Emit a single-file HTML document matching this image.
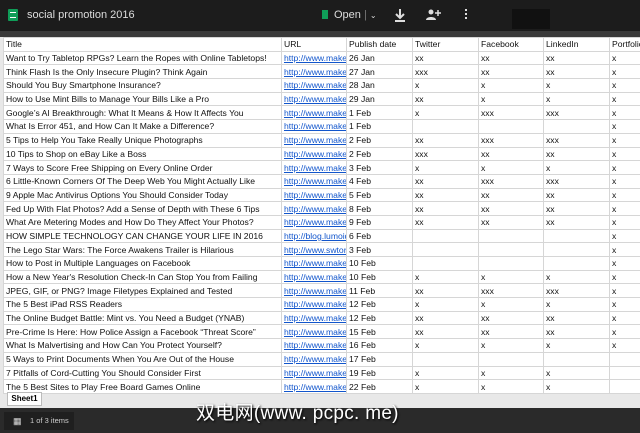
<!DOCTYPE html>
<html><head><meta charset="utf-8"><style>
*{margin:0;padding:0;box-sizing:border-box}
body{width:640px;height:433px;overflow:hidden;background:#2b2b2b;font-family:"Liberation Sans",Arial,sans-serif;position:relative}
.top{position:absolute;left:0;top:0;width:640px;height:31px;background:#1c1c1c;color:#ddd;font-size:11px}
.strip{position:absolute;left:0;top:31px;width:640px;height:6px;background:#3a3a3a}
.sheet{position:absolute;left:0;top:37px;width:640px;height:371px;background:#e8e8e8;overflow:hidden}
table{position:absolute;left:3px;top:0;width:646px;border-collapse:collapse;table-layout:fixed;background:#fff}
td{height:13.7px;border:1px solid #d6d6d6;font-size:8.6px;color:#111;padding:0 2px;white-space:nowrap;overflow:hidden;line-height:12px}
td.u{color:#1155cc;text-decoration:underline}
.tab{position:absolute;left:7px;top:392px;width:35px;height:14px;background:#fff;border:1px solid #bbb;font-size:8px;font-weight:bold;text-align:center;line-height:12px}
.bot{position:absolute;left:0;top:408px;width:640px;height:25px;background:#2a2a2a}
.items{position:absolute;left:4px;top:412px;width:70px;height:18px;background:#1f1f1f;color:#ccc;font-size:7.5px;line-height:18px;padding-left:26px}
.wm{position:absolute;left:196px;top:398px;color:#fff;font-size:19px;letter-spacing:0.3px;font-family:"Liberation Sans","Noto Sans CJK SC",sans-serif;text-shadow:1px 1px 2px #000}
</style></head><body>
<div class="top">
 <div style="position:absolute;left:8px;top:9px;width:10px;height:12px;background:#0f9d58;border-radius:1px"></div>
 <div style="position:absolute;left:10px;top:12px;width:6px;height:6px;border:1px solid #fff;border-width:1px 0"></div>
 <div style="position:absolute;left:27px;top:9px">social promotion 2016</div>
 <div style="position:absolute;left:322px;top:10px;width:6px;height:9px;background:#0f9d58"></div>
 <div style="position:absolute;left:334px;top:9px">Open <span style="color:#777">|</span> <span style="font-size:8px">&#8964;</span></div>
 <svg style="position:absolute;left:393px;top:8px" width="14" height="14"><path d="M7 1v8M3 6l4 4 4-4M2 13h10" stroke="#ddd" stroke-width="2" fill="none"/></svg>
 <svg style="position:absolute;left:425px;top:8px" width="16" height="14"><circle cx="6" cy="4" r="2.5" fill="#ddd"/><path d="M1 12c0-4 10-4 10 0z" fill="#ddd"/><path d="M13 2v6M10 5h6" stroke="#ddd" stroke-width="1.5"/></svg>
 <div style="position:absolute;left:465px;top:9px;width:2px;height:2px;background:#ddd;box-shadow:0 4px #ddd,0 8px #ddd"></div>
 <div style="position:absolute;left:512px;top:9px;width:38px;height:20px;background:#111"></div>
</div>
<div class="strip"></div>
<div class="sheet">
<table>
<colgroup><col style="width:278px"><col style="width:65px"><col style="width:66px"><col style="width:66px"><col style="width:65px"><col style="width:66px"><col style="width:40px"></colgroup>
<tr><td>Title</td><td>URL</td><td>Publish date</td><td>Twitter</td><td>Facebook</td><td>LinkedIn</td><td>Portfolio</td></tr>
<tr><td>Want to Try Tabletop RPGs? Learn the Ropes with Online Tabletops!</td><td class="u">http://www.makeuseof</td><td>26 Jan</td><td>xx</td><td>xx</td><td>xx</td><td>x</td></tr>
<tr><td>Think Flash Is the Only Insecure Plugin? Think Again</td><td class="u">http://www.makeuseof</td><td>27 Jan</td><td>xxx</td><td>xx</td><td>xx</td><td>x</td></tr>
<tr><td>Should You Buy Smartphone Insurance?</td><td class="u">http://www.makeuseof</td><td>28 Jan</td><td>x</td><td>x</td><td>x</td><td>x</td></tr>
<tr><td>How to Use Mint Bills to Manage Your Bills Like a Pro</td><td class="u">http://www.makeuseof</td><td>29 Jan</td><td>xx</td><td>x</td><td>x</td><td>x</td></tr>
<tr><td>Google’s AI Breakthrough: What It Means &amp; How It Affects You</td><td class="u">http://www.makeuseof</td><td>1 Feb</td><td>x</td><td>xxx</td><td>xxx</td><td>x</td></tr>
<tr><td>What Is Error 451, and How Can It Make a Difference?</td><td class="u">http://www.makeuseof</td><td>1 Feb</td><td></td><td></td><td></td><td>x</td></tr>
<tr><td>5 Tips to Help You Take Really Unique Photographs</td><td class="u">http://www.makeuseof</td><td>2 Feb</td><td>xx</td><td>xxx</td><td>xxx</td><td>x</td></tr>
<tr><td>10 Tips to Shop on eBay Like a Boss</td><td class="u">http://www.makeuseof</td><td>2 Feb</td><td>xxx</td><td>xx</td><td>xx</td><td>x</td></tr>
<tr><td>7 Ways to Score Free Shipping on Every Online Order</td><td class="u">http://www.makeuseof</td><td>3 Feb</td><td>x</td><td>x</td><td>x</td><td>x</td></tr>
<tr><td>6 Little-Known Corners Of The Deep Web You Might Actually Like</td><td class="u">http://www.makeuseof</td><td>4 Feb</td><td>xx</td><td>xxx</td><td>xxx</td><td>x</td></tr>
<tr><td>9 Apple Mac Antivirus Options You Should Consider Today</td><td class="u">http://www.makeuseof</td><td>5 Feb</td><td>xx</td><td>xx</td><td>xx</td><td>x</td></tr>
<tr><td>Fed Up With Flat Photos? Add a Sense of Depth with These 6 Tips</td><td class="u">http://www.makeuseof</td><td>8 Feb</td><td>xx</td><td>xx</td><td>xx</td><td>x</td></tr>
<tr><td>What Are Metering Modes and How Do They Affect Your Photos?</td><td class="u">http://www.makeuseof</td><td>9 Feb</td><td>xx</td><td>xx</td><td>xx</td><td>x</td></tr>
<tr><td>HOW SIMPLE TECHNOLOGY CAN CHANGE YOUR LIFE IN 2016</td><td class="u">http://blog.lumoid.com</td><td>6 Feb</td><td></td><td></td><td></td><td>x</td></tr>
<tr><td>The Lego Star Wars: The Force Awakens Trailer is Hilarious</td><td class="u">http://www.swtorstrategies</td><td>3 Feb</td><td></td><td></td><td></td><td>x</td></tr>
<tr><td>How to Post in Multiple Languages on Facebook</td><td class="u">http://www.makeuseof</td><td>10 Feb</td><td></td><td></td><td></td><td>x</td></tr>
<tr><td>How a New Year's Resolution Check-In Can Stop You from Failing</td><td class="u">http://www.makeuseof</td><td>10 Feb</td><td>x</td><td>x</td><td>x</td><td>x</td></tr>
<tr><td>JPEG, GIF, or PNG? Image Filetypes Explained and Tested</td><td class="u">http://www.makeuseof</td><td>11 Feb</td><td>xx</td><td>xxx</td><td>xxx</td><td>x</td></tr>
<tr><td>The 5 Best iPad RSS Readers</td><td class="u">http://www.makeuseof</td><td>12 Feb</td><td>x</td><td>x</td><td>x</td><td>x</td></tr>
<tr><td>The Online Budget Battle: Mint vs. You Need a Budget (YNAB)</td><td class="u">http://www.makeuseof</td><td>12 Feb</td><td>xx</td><td>xx</td><td>xx</td><td>x</td></tr>
<tr><td>Pre-Crime Is Here: How Police Assign a Facebook “Threat Score”</td><td class="u">http://www.makeuseof</td><td>15 Feb</td><td>xx</td><td>xx</td><td>xx</td><td>x</td></tr>
<tr><td>What Is Malvertising and How Can You Protect Yourself?</td><td class="u">http://www.makeuseof</td><td>16 Feb</td><td>x</td><td>x</td><td>x</td><td>x</td></tr>
<tr><td>5 Ways to Print Documents When You Are Out of the House</td><td class="u">http://www.makeuseof</td><td>17 Feb</td><td></td><td></td><td></td><td></td></tr>
<tr><td>7 Pitfalls of Cord-Cutting You Should Consider First</td><td class="u">http://www.makeuseof</td><td>19 Feb</td><td>x</td><td>x</td><td>x</td><td></td></tr>
<tr><td>The 5 Best Sites to Play Free Board Games Online</td><td class="u">http://www.makeuseof</td><td>22 Feb</td><td>x</td><td>x</td><td>x</td><td></td></tr>
</table>
</div>
<div class="tab">Sheet1</div>
<div class="bot"></div>
<div class="items"><span style="position:absolute;left:9px;top:0;font-size:9px;color:#ddd">&#9638;</span>1 of 3 items</div>
<div class="wm">双电网(www. pcpc. me)</div>
</body></html>
